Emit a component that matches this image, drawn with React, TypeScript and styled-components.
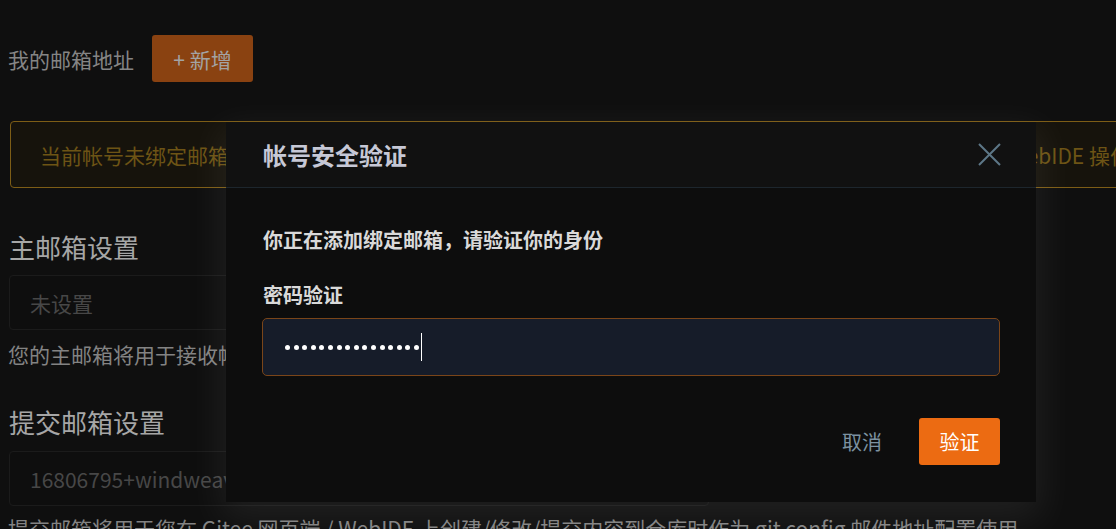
import React from "react";
import styled, { createGlobalStyle } from "styled-components";

const Global = createGlobalStyle`
  html, body { margin: 0; padding: 0; overflow: hidden; background: #0f0f0f; }
  body { font-family: "Noto Sans CJK SC", "Noto Sans", sans-serif; }
  * { box-sizing: border-box; }
`;

const Page = styled.div`
  position: relative;
  width: 1116px;
  height: 529px;
  overflow: hidden;
  padding: 35px 0 0 8px;
  background: #0f0f0f;
`;

const Row = styled.div`
  display: flex;
  align-items: center;
  gap: 18px;
  height: 47px;
`;

const Label = styled.span`
  font-size: 21px;
  color: #858585;
  line-height: 30px;
`;

const AddButton = styled.button`
  width: 101px;
  height: 47px;
  border: none;
  border-radius: 3px;
  background: #8a4211;
  color: #a3a3a3;
  font-family: inherit;
  font-size: 21px;
  padding: 0;
`;

const Banner = styled.div`
  margin: 39px 0 0 2px;
  width: 1200px;
  height: 67px;
  border: 1px solid #7d5d16;
  border-radius: 4px;
  background: #16130c;
  display: flex;
  align-items: center;
  padding-left: 29px;
  color: #6d5415;
  font-size: 21px;
  white-space: nowrap;
`;

const SectionTitle = styled.h2<{ $top: number }>`
  margin: ${(p) => p.$top}px 0 0 1px;
  font-size: 26px;
  font-weight: 400;
  line-height: 36px;
  color: #a6a6a6;
`;

const Field = styled.div<{ $top: number }>`
  margin: ${(p) => p.$top}px 0 0 1px;
  width: 700px;
  height: 55px;
  border: 1px solid #1b1b1b;
  border-radius: 4px;
  background: #0e0e0e;
  display: flex;
  align-items: center;
  padding-left: 20px;
  font-size: 21px;
  color: #474747;
`;

const Help = styled.p<{ $top: number }>`
  margin: ${(p) => p.$top}px 0 0 0;
  font-size: 21px;
  line-height: 30px;
  color: #838383;
  white-space: nowrap;
`;

const Dialog = styled.div`
  position: absolute;
  left: 226px;
  top: 122px;
  width: 810px;
  height: 380px;
  background: #0d0d0d;
  box-shadow: 0 12px 36px 6px rgba(255, 255, 255, 0.07);
  display: flex;
  flex-direction: column;
`;

const DialogHeader = styled.div`
  height: 66px;
  flex: none;
  background: #111111;
  border-bottom: 1px solid #1d262d;
  display: flex;
  align-items: center;
  justify-content: space-between;
  padding: 0 35px 0 37px;
`;

const DialogTitle = styled.h3`
  margin: 0;
  font-size: 24px;
  font-weight: 700;
  color: #c6c8d6;
  line-height: 32px;
`;

const CloseButton = styled.button`
  width: 23px;
  height: 23px;
  padding: 0;
  border: none;
  background: none;
  display: flex;
`;

const DialogBody = styled.div`
  padding: 37px 36px 0 36px;
  display: flex;
  flex-direction: column;
`;

const Strong = styled.div<{ $top?: number }>`
  margin-top: ${(p) => p.$top ?? 0}px;
  padding-left: 1px;
  font-size: 20px;
  font-weight: 700;
  line-height: 30px;
  color: #d9d9d9;
`;

const PasswordBox = styled.div`
  margin-top: 8px;
  height: 58px;
  border: 1px solid #7a4519;
  border-radius: 5px;
  background: #161c29;
  display: flex;
  align-items: center;
  padding-left: 22px;
`;

const Dots = styled.span`
  display: flex;
  gap: 3.6px;
`;

const Dot = styled.i`
  width: 5px;
  height: 5px;
  border-radius: 50%;
  background: #ffffff;
`;

const Caret = styled.span`
  width: 1px;
  height: 28px;
  margin-left: 2px;
  background: #ffffff;
`;

const DialogFooter = styled.div`
  margin-top: 42px;
  padding-right: 36px;
  display: flex;
  justify-content: flex-end;
  align-items: center;
  gap: 37px;
`;

const CancelButton = styled.button`
  border: none;
  background: none;
  padding: 0;
  font-family: inherit;
  font-size: 20px;
  color: #7c92a1;
`;

const ConfirmButton = styled.button`
  width: 81px;
  height: 47px;
  border: none;
  border-radius: 3px;
  background: #ec6b12;
  color: #ffffff;
  font-family: inherit;
  font-size: 20px;
  padding: 0;
`;

export default function App() {
  return (
    <>
      <Global />
      <Page>
        <Row>
          <Label>我的邮箱地址</Label>
          <AddButton>+ 新增</AddButton>
        </Row>
        <Banner>
          当前帐号未绑定邮箱，将无法接收通知邮件，也无法使用邮箱找回帐号密码，同时无法在 Gitee 网页端及 WebIDE 操作
        </Banner>
        <SectionTitle $top={41}>主邮箱设置</SectionTitle>
        <Field $top={10}>未设置</Field>
        <Help $top={9}>您的主邮箱将用于接收帐号相关的通知邮件</Help>
        <SectionTitle $top={35}>提交邮箱设置</SectionTitle>
        <Field $top={11}>16806795+windweaver@user.noreply.gitee.com</Field>
        <Help $top={7}>
          提交邮箱将用于您在 Gitee 网页端 / WebIDE 上创建/修改/提交内容到仓库时作为 git config 邮件地址配置使用
        </Help>

        <Dialog>
          <DialogHeader>
            <DialogTitle>帐号安全验证</DialogTitle>
            <CloseButton aria-label="关闭">
              <svg width="23" height="23" viewBox="0 0 23 23">
                <path d="M1 1 L22 22 M22 1 L1 22" stroke="#5d7787" strokeWidth="2" fill="none" />
              </svg>
            </CloseButton>
          </DialogHeader>
          <DialogBody>
            <Strong>你正在添加绑定邮箱，请验证你的身份</Strong>
            <Strong $top={25}>密码验证</Strong>
            <PasswordBox>
              <Dots>
                {Array.from({ length: 16 }).map((_, i) => (
                  <Dot key={i} />
                ))}
              </Dots>
              <Caret />
            </PasswordBox>
          </DialogBody>
          <DialogFooter>
            <CancelButton>取消</CancelButton>
            <ConfirmButton>验证</ConfirmButton>
          </DialogFooter>
        </Dialog>
      </Page>
    </>
  );
}
